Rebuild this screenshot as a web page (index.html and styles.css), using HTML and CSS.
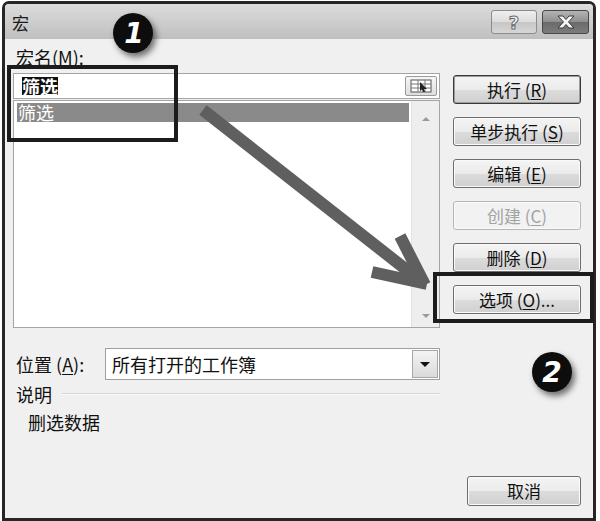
FILE: index.html
```html
<!DOCTYPE html>
<html lang="zh-CN">
<head>
<meta charset="utf-8">
<title>宏</title>
<link rel="stylesheet" href="styles.css">
</head>
<body>
<div class="window">
  <div class="titlebar">
    <span class="title">宏</span>
    <div class="caption-btns">
      <span class="cap help">?</span>
      <span class="cap close">
        <svg width="20" height="14" viewBox="0 0 20 14">
          <path d="M2 1 L7 1 L10 4.5 L13 1 L18 1 L12.5 7 L18 13 L13 13 L10 9.5 L7 13 L2 13 L7.5 7 Z" fill="#f4f4f4" stroke="#3a3a3a" stroke-width="1"/>
        </svg>
      </span>
    </div>
  </div>
  <div class="client">
    <div class="main">
      <div class="leftcol">
        <div class="label">宏名(<u>M</u>):</div>
        <div class="namebox">
          <span class="sel">筛选</span>
          <span class="pick">
            <svg width="22" height="14" viewBox="0 0 22 14">
              <rect x="1" y="1" width="20" height="12" fill="#fff" stroke="#555" stroke-width="1"/>
              <line x1="1" y1="5" x2="21" y2="5" stroke="#777"/>
              <line x1="1" y1="9" x2="21" y2="9" stroke="#777"/>
              <line x1="8" y1="1" x2="8" y2="13" stroke="#777"/>
              <line x1="15" y1="1" x2="15" y2="13" stroke="#777"/>
              <path d="M10 3 L17 10 L14 10 L15 13 L13 13 L12 10.5 L10 12 Z" fill="#222"/>
            </svg>
          </span>
        </div>
        <div class="listbox">
          <div class="items">
            <div class="item selected">筛选</div>
          </div>
          <div class="scrollbar">
            <span class="tri up"></span>
            <span class="tri down"></span>
          </div>
        </div>
      </div>
      <div class="btncol">
        <button class="btn default">执行 (<u>R</u>)</button>
        <button class="btn">单步执行 (<u>S</u>)</button>
        <button class="btn">编辑 (<u>E</u>)</button>
        <button class="btn disabled">创建 (<u>C</u>)</button>
        <button class="btn">删除 (<u>D</u>)</button>
        <button class="btn">选项 (<u>O</u>)...</button>
      </div>
    </div>
    <div class="location">
      <span class="loc-label">位置 (<u>A</u>):</span>
      <div class="select">
        <span class="select-text">所有打开的工作簿</span>
        <span class="dropbtn"><span class="tri dark"></span></span>
      </div>
    </div>
    <div class="desc-head">
      <span>说明</span>
      <span class="rule"></span>
    </div>
    <div class="desc">删选数据</div>
    <div class="footer">
      <button class="btn cancel">取消</button>
    </div>
  </div>
</div>

<svg class="overlay" width="600" height="521" viewBox="0 0 600 521">
  <defs>
    <filter id="shadow" x="-50%" y="-50%" width="200%" height="200%">
      <feDropShadow dx="3" dy="4" stdDeviation="3" flood-color="#000" flood-opacity="0.55"/>
    </filter>
  </defs>
  <rect x="9" y="67" width="167" height="73" fill="none" stroke="#1c1c1c" stroke-width="4"/>
  <rect x="435" y="274" width="157" height="47" fill="none" stroke="#1c1c1c" stroke-width="4"/>
  <g stroke="#5f5f5f" stroke-width="12" fill="none">
    <line x1="203" y1="110" x2="422" y2="282"/>
    <line x1="400" y1="236" x2="425" y2="285" stroke-linecap="butt"/>
    <line x1="372" y1="272" x2="427" y2="284"/>
  </g>
  <g filter="url(#shadow)">
    <circle cx="133" cy="33" r="20" fill="#111"/>
    <circle cx="552" cy="372" r="20" fill="#111"/>
  </g>
  <text x="134" y="43" class="badge-num" text-anchor="middle">1</text>
  <text x="552" y="382" class="badge-num" text-anchor="middle">2</text>
</svg>
</body>
</html>
```

FILE: styles.css
```css
* { box-sizing: border-box; }

body {
  margin: 0;
  width: 600px;
  height: 521px;
  background: #ffffff;
  position: relative;
  overflow: hidden;
  font-family: "Noto Sans CJK SC", "Liberation Sans", sans-serif;
  color: #111;
}

.window {
  margin: 1px 0 0 2px;
  width: 594px;
  height: 520px;
  border: 3px solid #262626;
  border-radius: 7px 7px 0 0;
  background: #f0f0f0;
  display: flex;
  flex-direction: column;
  overflow: hidden;
}

.titlebar {
  height: 35px;
  flex: none;
  background: linear-gradient(#dcdcdc, #bfbfbf);
  display: flex;
  justify-content: space-between;
  align-items: flex-start;
  padding: 0 4px 0 7px;
}

.title {
  font-size: 17px;
  line-height: 20px;
  margin-top: 9px;
  color: #1a1a1a;
}

.caption-btns {
  display: flex;
  gap: 5px;
  margin-top: 6px;
}

.cap {
  height: 24px;
  border-radius: 3px;
  display: flex;
  align-items: center;
  justify-content: center;
  font-family: "DejaVu Sans", sans-serif;
  font-weight: bold;
}

.help {
  width: 46px;
  border: 1px solid #8c8c8c;
  background: linear-gradient(#efefef 0%, #dcdcdc 50%, #c6c6c6 51%, #d6d6d6 100%);
  color: #f4f4f4;
  font-size: 18px;
  -webkit-text-stroke: 1px #6a6a6a;
}

.close {
  width: 47px;
  border: 1px solid #474747;
  background: linear-gradient(#b4b4b4 0%, #8e8e8e 50%, #6a6a6a 51%, #7c7c7c 100%);
}

.client {
  flex: 1;
  display: flex;
  flex-direction: column;
  padding: 8px 12px 0 8px;
}

.main {
  display: flex;
  gap: 13px;
}

.leftcol {
  width: 427px;
  display: flex;
  flex-direction: column;
}

.label {
  font-size: 18px;
  line-height: 20px;
  height: 20px;
  padding-left: 3px;
  margin-bottom: 6px;
}

u { text-decoration: underline; text-underline-offset: 2px; }

.namebox {
  height: 26px;
  border: 1px solid #a4a4a4;
  background: #fff;
  display: flex;
  align-items: center;
  justify-content: space-between;
  padding: 0 2px 0 8px;
}

.sel {
  background: #111;
  color: #fff;
  font-size: 18px;
  line-height: 18px;
  font-weight: bold;
}

.pick {
  width: 32px;
  height: 20px;
  border: 1px solid #9a9a9a;
  border-radius: 2px;
  background: linear-gradient(#f6f6f6, #dedede);
  display: flex;
  align-items: center;
  justify-content: center;
}

.listbox {
  margin-top: 1px;
  height: 228px;
  border: 1px solid #a4a4a4;
  background: #fff;
  display: flex;
}

.items {
  flex: 1;
  padding: 2px 2px 0 3px;
}

.item {
  font-size: 18px;
  line-height: 19px;
  height: 19px;
  padding-left: 1px;
}

.item.selected {
  background: #8a8a8a;
  color: #fff;
}

.scrollbar {
  width: 28px;
  background: #eeeeee;
  border-left: 1px solid #e2e2e2;
  display: flex;
  flex-direction: column;
  justify-content: space-between;
  align-items: center;
  padding: 16px 0 9px;
}

.tri {
  width: 0;
  height: 0;
  border-left: 4px solid transparent;
  border-right: 4px solid transparent;
}

.tri.up { border-bottom: 4px solid #9a9a9a; }
.tri.down { border-top: 4px solid #9a9a9a; }
.tri.dark { border-top: 5px solid #111; border-left-width: 5px; border-right-width: 5px; }

.btncol {
  width: 128px;
  display: flex;
  flex-direction: column;
  gap: 13px;
  margin-top: 28px;
}

.btn {
  height: 29px;
  border: 1px solid #6e6e6e;
  border-radius: 3px;
  background: linear-gradient(#f4f4f4 0%, #ebebeb 50%, #dcdcdc 51%, #d0d0d0 100%);
  font-family: "Noto Sans CJK SC", "Liberation Sans", sans-serif;
  font-size: 17px;
  line-height: 20px;
  color: #111;
  padding: 0;
  box-shadow: inset 0 0 0 1px #fafafa;
}

.btn.default {
  border-color: #3a3a3a;
  box-shadow: inset 0 0 0 1px #9c9c9c;
}

.btn.disabled {
  color: #a2a2a2;
  border-color: #b6b6b6;
  background: #f2f2f2;
}

.location {
  margin-top: 20px;
  height: 32px;
  display: flex;
  align-items: center;
  width: 427px;
}

.loc-label {
  width: 92px;
  font-size: 18px;
  padding-left: 3px;
}

.select {
  flex: 1;
  height: 32px;
  border: 1px solid #a0a0a0;
  background: #fff;
  display: flex;
  align-items: center;
  justify-content: space-between;
  padding: 1px 1px 1px 6px;
}

.select-text {
  font-size: 18px;
  line-height: 20px;
}

.dropbtn {
  width: 26px;
  height: 28px;
  border: 1px solid #a8a8a8;
  background: linear-gradient(#f4f4f4, #dadada);
  display: flex;
  align-items: center;
  justify-content: center;
}

.desc-head {
  margin-top: 5px;
  height: 18px;
  width: 427px;
  display: flex;
  align-items: center;
  gap: 10px;
  font-size: 18px;
  line-height: 18px;
  padding-left: 3px;
}

.rule {
  flex: 1;
  height: 2px;
  border-top: 1px solid #d6d6d6;
  border-bottom: 1px solid #fbfbfb;
}

.desc {
  margin-top: 10px;
  font-size: 18px;
  line-height: 18px;
  padding-left: 15px;
}

.footer {
  margin-top: 45px;
  display: flex;
  justify-content: flex-end;
}

.btn.cancel {
  width: 114px;
  height: 30px;
}

.overlay {
  position: absolute;
  top: 0;
  left: 0;
  pointer-events: none;
}

.badge-num {
  font-family: "DejaVu Sans", sans-serif;
  font-weight: bold;
  font-style: italic;
  font-size: 28px;
  fill: #fff;
}
```
